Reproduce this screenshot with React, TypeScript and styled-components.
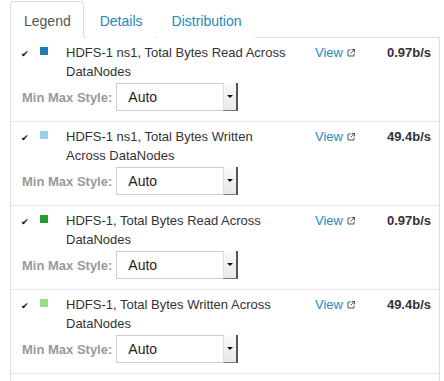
import styled, { createGlobalStyle } from 'styled-components'

const GlobalStyle = createGlobalStyle`
  html, body {
    margin: 0;
    padding: 0;
    background: #fff;
    overflow: hidden;
  }
  body {
    font-family: 'Liberation Sans', Arial, Helvetica, sans-serif;
    color: #333;
  }
`

const Page = styled.div`
  padding: 1px 4px 0 10px;
  height: 381px;
  box-sizing: border-box;
  display: flex;
  flex-direction: column;
`

const TabBar = styled.div`
  display: flex;
  border-bottom: 1px solid #ddd;
  height: 36px;
  flex-shrink: 0;
`

const Tab = styled.div<{ $active?: boolean }>`
  display: flex;
  align-items: center;
  padding: 2px 12px 0 13px;
  margin-right: 2px;
  margin-bottom: -1px;
  font-size: 14px;
  color: ${(p) => (p.$active ? '#555' : '#1d8ac0')};
  background: #fff;
  border: 1px solid ${(p) => (p.$active ? '#ddd' : 'transparent')};
  border-bottom-color: ${(p) => (p.$active ? '#fff' : 'transparent')};
  border-radius: 4px 4px 0 0;
  box-sizing: border-box;
  height: 37px;
`

const Panel = styled.div`
  flex: 1;
  border-left: 1px solid #ddd;
  border-right: 1px solid #ddd;
`

const Row = styled.div`
  border-bottom: 1px solid #e5e5e5;
  padding: 5px 8px 10px 10px;
`

const Top = styled.div`
  display: grid;
  grid-template-columns: 19px 26px 225px 1fr auto;
  align-items: start;
  font-size: 13px;
  line-height: 19px;
`

const Check = styled.span`
  font-size: 9px;
  line-height: 19px;
  padding-top: 2px;
  color: #111;
`

const Swatch = styled.span<{ $color: string }>`
  display: block;
  width: 8px;
  height: 8px;
  margin-top: 4px;
  background: ${(p) => p.$color};
`

const Label = styled.span`
  color: #333;
`

const ViewLink = styled.span`
  padding-left: 24px;
  color: #1d8ac0;
  display: flex;
  align-items: center;
  gap: 4px;
`

const Value = styled.span`
  font-weight: bold;
  color: #333;
`

const Bottom = styled.div`
  display: flex;
  align-items: center;
  gap: 4px;
  margin-top: 2px;
`

const StyleLabel = styled.span`
  font-size: 13px;
  font-weight: bold;
  color: #999;
  padding-left: 1px;
`

const SelectBox = styled.div`
  display: flex;
  width: 122px;
  height: 28px;
  box-sizing: border-box;
  border: 1px solid #ccc;
  background: #fff;
`

const SelectText = styled.span`
  flex: 1;
  display: flex;
  align-items: center;
  padding-left: 11px;
  font-size: 14px;
  color: #222;
`

const SelectArrow = styled.span`
  width: 12px;
  display: flex;
  align-items: center;
  justify-content: center;
  background: linear-gradient(#fafafa, #e8e8e8);
  border-left: 1px solid #ddd;
  border-right: 2px solid #555;
  border-bottom: 1px solid #777;
  margin: -1px -1px -1px 0;
`

const Caret = styled.span`
  width: 0;
  height: 0;
  border-left: 3px solid transparent;
  border-right: 3px solid transparent;
  border-top: 3px solid #111;
`

const ExternalIcon = () => (
  <svg width="8" height="8" viewBox="0 0 8 8" fill="none" stroke="#444" strokeWidth="0.9">
    <path d="M3.5 1H1v6h6V4.5" />
    <path d="M4.5 0.5H7.5V3.5" />
    <path d="M7.5 0.5L3.5 4.5" />
  </svg>
)

const series = [
  { color: '#1f7bb8', label: 'HDFS-1 ns1, Total Bytes Read Across DataNodes', value: '0.97b/s' },
  { color: '#98d0e6', label: 'HDFS-1 ns1, Total Bytes Written Across DataNodes', value: '49.4b/s' },
  { color: '#22a02e', label: 'HDFS-1, Total Bytes Read Across DataNodes', value: '0.97b/s' },
  { color: '#98df8a', label: 'HDFS-1, Total Bytes Written Across DataNodes', value: '49.4b/s' },
]

const App = () => {
  return (
    <>
      <GlobalStyle />
      <Page>
        <TabBar>
          <Tab $active>Legend</Tab>
          <Tab>Details</Tab>
          <Tab>Distribution</Tab>
        </TabBar>
        <Panel>
          {series.map((s) => (
            <Row key={s.label}>
              <Top>
                <Check>✔</Check>
                <Swatch $color={s.color} />
                <Label>{s.label}</Label>
                <ViewLink>
                  View <ExternalIcon />
                </ViewLink>
                <Value>{s.value}</Value>
              </Top>
              <Bottom>
                <StyleLabel>Min Max Style:</StyleLabel>
                <SelectBox>
                  <SelectText>Auto</SelectText>
                  <SelectArrow>
                    <Caret />
                  </SelectArrow>
                </SelectBox>
              </Bottom>
            </Row>
          ))}
        </Panel>
      </Page>
    </>
  )
}

export default App
